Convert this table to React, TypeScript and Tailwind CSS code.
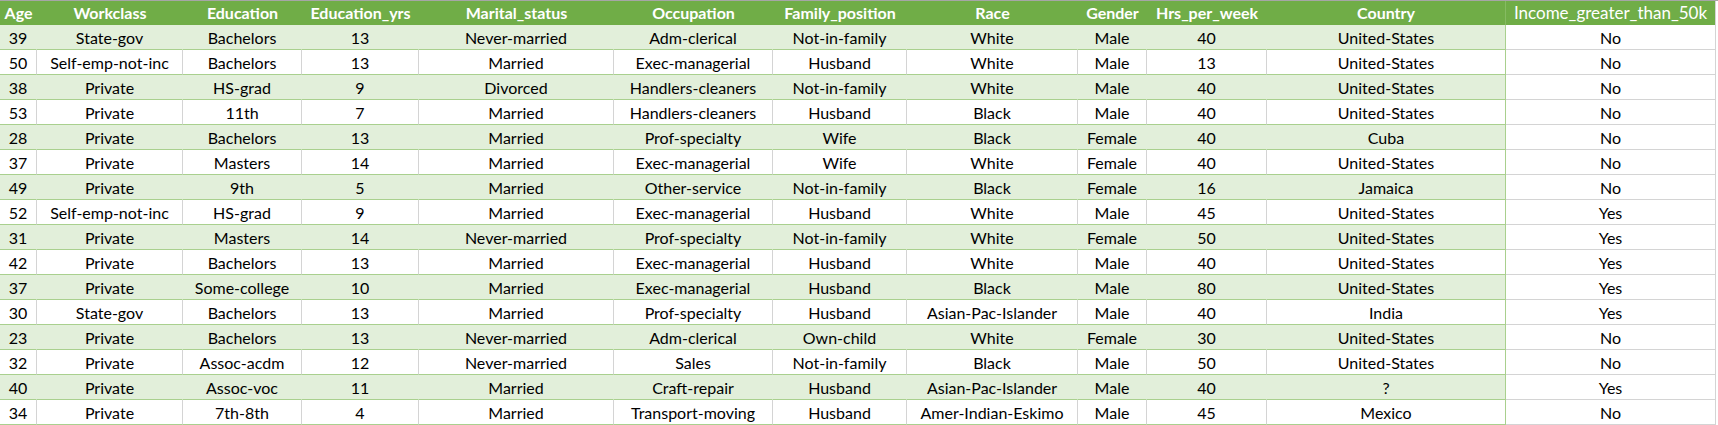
import React from 'react';

const columns = [
  { name: 'Age', width: 'w-[37px]' },
  { name: 'Workclass', width: 'w-[146px]' },
  { name: 'Education', width: 'w-[119px]' },
  { name: 'Education_yrs', width: 'w-[117px]' },
  { name: 'Marital_status', width: 'w-[195px]' },
  { name: 'Occupation', width: 'w-[159px]' },
  { name: 'Family_position', width: 'w-[134px]' },
  { name: 'Race', width: 'w-[171px]' },
  { name: 'Gender', width: 'w-[69px]' },
  { name: 'Hrs_per_week', width: 'w-[120px]' },
  { name: 'Country', width: 'w-[239px]' },
];

const rows: string[][] = [
  ['39', 'State-gov', 'Bachelors', '13', 'Never-married', 'Adm-clerical', 'Not-in-family', 'White', 'Male', '40', 'United-States', 'No'],
  ['50', 'Self-emp-not-inc', 'Bachelors', '13', 'Married', 'Exec-managerial', 'Husband', 'White', 'Male', '13', 'United-States', 'No'],
  ['38', 'Private', 'HS-grad', '9', 'Divorced', 'Handlers-cleaners', 'Not-in-family', 'White', 'Male', '40', 'United-States', 'No'],
  ['53', 'Private', '11th', '7', 'Married', 'Handlers-cleaners', 'Husband', 'Black', 'Male', '40', 'United-States', 'No'],
  ['28', 'Private', 'Bachelors', '13', 'Married', 'Prof-specialty', 'Wife', 'Black', 'Female', '40', 'Cuba', 'No'],
  ['37', 'Private', 'Masters', '14', 'Married', 'Exec-managerial', 'Wife', 'White', 'Female', '40', 'United-States', 'No'],
  ['49', 'Private', '9th', '5', 'Married', 'Other-service', 'Not-in-family', 'Black', 'Female', '16', 'Jamaica', 'No'],
  ['52', 'Self-emp-not-inc', 'HS-grad', '9', 'Married', 'Exec-managerial', 'Husband', 'White', 'Male', '45', 'United-States', 'Yes'],
  ['31', 'Private', 'Masters', '14', 'Never-married', 'Prof-specialty', 'Not-in-family', 'White', 'Female', '50', 'United-States', 'Yes'],
  ['42', 'Private', 'Bachelors', '13', 'Married', 'Exec-managerial', 'Husband', 'White', 'Male', '40', 'United-States', 'Yes'],
  ['37', 'Private', 'Some-college', '10', 'Married', 'Exec-managerial', 'Husband', 'Black', 'Male', '80', 'United-States', 'Yes'],
  ['30', 'State-gov', 'Bachelors', '13', 'Married', 'Prof-specialty', 'Husband', 'Asian-Pac-Islander', 'Male', '40', 'India', 'Yes'],
  ['23', 'Private', 'Bachelors', '13', 'Never-married', 'Adm-clerical', 'Own-child', 'White', 'Female', '30', 'United-States', 'No'],
  ['32', 'Private', 'Assoc-acdm', '12', 'Never-married', 'Sales', 'Not-in-family', 'Black', 'Male', '50', 'United-States', 'No'],
  ['40', 'Private', 'Assoc-voc', '11', 'Married', 'Craft-repair', 'Husband', 'Asian-Pac-Islander', 'Male', '40', '?', 'Yes'],
  ['34', 'Private', '7th-8th', '4', 'Married', 'Transport-moving', 'Husband', 'Amer-Indian-Eskimo', 'Male', '45', 'Mexico', 'No'],
];

export default function App() {
  return (
    <div className="w-[1718px] h-[425px] bg-white overflow-hidden font-['Lato','Liberation_Sans',sans-serif] text-[16px] text-black">
      <div className="h-px bg-[#a6a6a6]" />
      {/* header */}
      <div className="flex h-6">
        {columns.map((col, i) => (
          <div
            key={col.name}
            className={`${col.width} flex items-center justify-center bg-[#70ad47] font-bold text-white whitespace-nowrap ${
              i === columns.length - 1 ? 'border-r border-[#86bb62]' : ''
            }`}
          >
            {col.name}
          </div>
        ))}
        <div className="w-[210px] flex items-center justify-center bg-[#70ad47] text-white whitespace-nowrap text-[17px] border-r border-[#d4d4d4]">
          Income_greater_than_50k
        </div>
      </div>
      {rows.map((row, r) => {
        const shaded = r % 2 === 0;
        return (
          <div key={r} className="flex h-[25px]">
            {columns.map((col, i) => {
              const last = i === columns.length - 1;
              const right = last
                ? 'border-[#a9d08e]'
                : shaded
                ? 'border-r-[#e2efda]'
                : 'border-r-[#d4d4d4]';
              return (
                <div
                  key={col.name}
                  className={`${col.width} flex items-center justify-center pt-px whitespace-nowrap border-b border-r border-b-[#a9d08e] ${right} ${
                    shaded ? 'bg-[#e2efda]' : 'bg-white'
                  }`}
                >
                  {row[i]}
                </div>
              );
            })}
            <div className="w-[210px] flex items-center justify-center pt-px border-b border-r border-[#d4d4d4] bg-white">
              {row[11]}
            </div>
          </div>
        );
      })}
    </div>
  );
}
